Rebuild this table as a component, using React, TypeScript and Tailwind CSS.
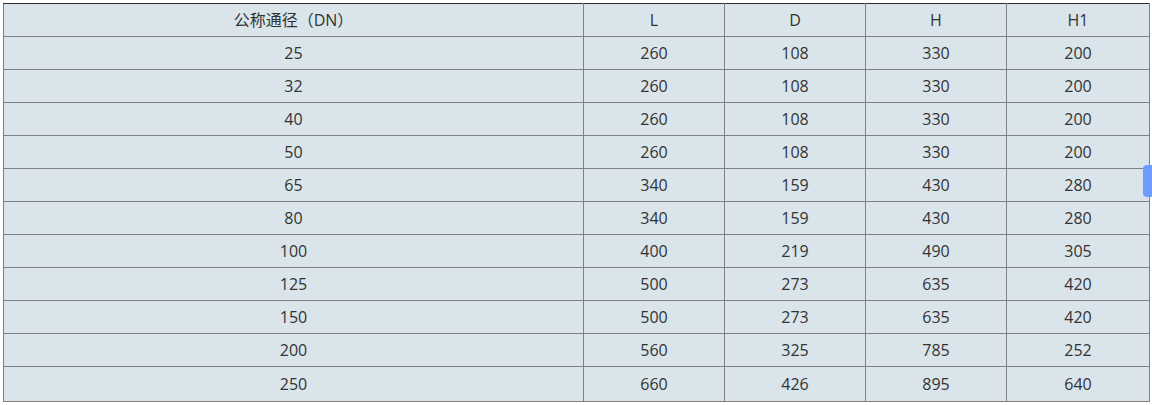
import React from "react";

const rows = [
  ["25", "260", "108", "330", "200"],
  ["32", "260", "108", "330", "200"],
  ["40", "260", "108", "330", "200"],
  ["50", "260", "108", "330", "200"],
  ["65", "340", "159", "430", "280"],
  ["80", "340", "159", "430", "280"],
  ["100", "400", "219", "490", "305"],
  ["125", "500", "273", "635", "420"],
  ["150", "500", "273", "635", "420"],
  ["200", "560", "325", "785", "252"],
  ["250", "660", "426", "895", "640"],
];

const head = ["公称通径（DN）", "L", "D", "H", "H1"];

export default function App() {
  return (
    <div className="relative w-[1152px] h-[405px] bg-white overflow-hidden pt-[3px] pl-[3px]" style={{ fontFamily: '"Open Sans", "Noto Sans CJK SC", sans-serif' }}>
      <table className="border-collapse table-fixed w-[1146px] border border-[#2b2b2b] bg-[#d9e5eb] text-[16px] text-[#333]">
        <colgroup>
          <col className="w-[580px]" />
          <col className="w-[141px]" />
          <col className="w-[141px]" />
          <col className="w-[141px]" />
          <col className="w-[143px]" />
        </colgroup>
        <tbody>
          <tr className="h-[33px]">
            {head.map((h, i) => (
              <td key={i} className="border border-[#808080] border-t-[#2b2b2b] text-center p-0 align-middle leading-[20px]">
                {h}
              </td>
            ))}
          </tr>
          {rows.map((r, ri) => (
            <tr key={ri} className={ri === rows.length - 1 ? "h-[35px]" : "h-[33px]"}>
              {r.map((c, ci) => (
                <td key={ci} className="border border-[#808080] text-center p-0 align-middle leading-[20px]">
                  {c}
                </td>
              ))}
            </tr>
          ))}
        </tbody>
      </table>
      <div className="absolute right-0 top-[165px] w-[9px] h-[32px] rounded-l-[4px] bg-[#6e9bff]" />
    </div>
  );
}
